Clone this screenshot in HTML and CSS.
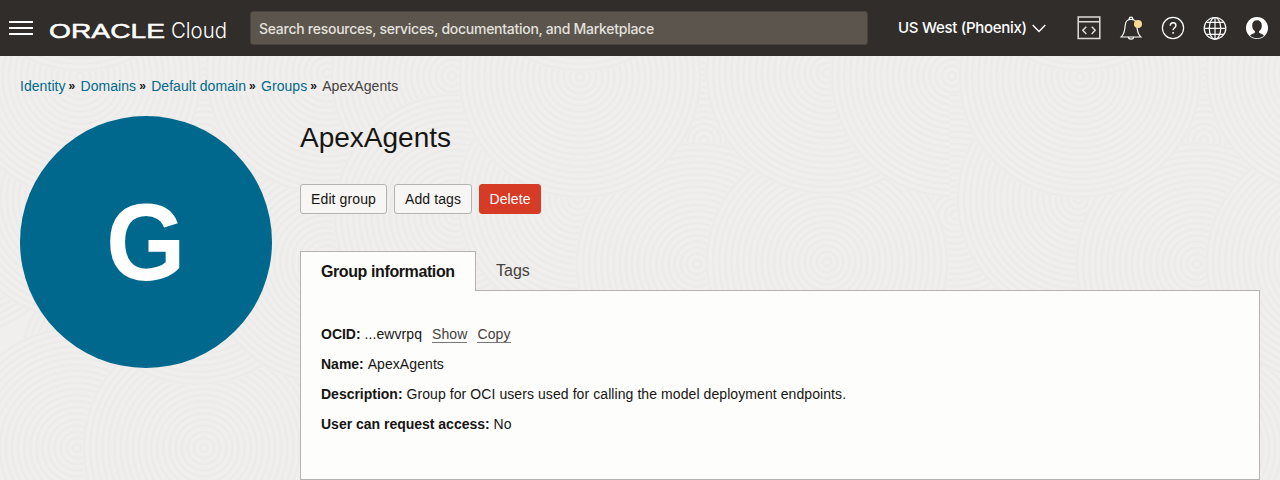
FILE: index.html
```html
<!DOCTYPE html>
<html lang="en">
<head>
<meta charset="utf-8">
<title>ApexAgents</title>
<link rel="stylesheet" href="styles.css">
</head>
<body>
<svg class="texture" width="1280" height="480" aria-hidden="true">
  <defs>
    <radialGradient id="rings" gradientUnits="userSpaceOnUse" cx="0" cy="0" r="6.1" spreadMethod="repeat">
      <stop offset="0" stop-color="#f0efed"/>
      <stop offset=".3" stop-color="#f0efed"/>
      <stop offset=".7" stop-color="#ebeae8"/>
      <stop offset="1" stop-color="#f0efed"/>
    </radialGradient>
    <circle id="disc" r="122" fill="url(#rings)"/>
    <g id="tile">
      <use href="#disc" x="455" y="215"/>
      <use href="#disc" x="640" y="370"/>
      <use href="#disc" x="800" y="370"/>
      <use href="#disc" x="820" y="490"/>
      <use href="#disc" x="704" y="140"/>
      <use href="#disc" x="577" y="448"/>
      <use href="#disc" x="704" y="448"/>
      <use href="#disc" x="578" y="199"/>
      <use href="#disc" x="697" y="264"/>
      <use href="#disc" x="827" y="262"/>
      <use href="#disc" x="827" y="73"/>
      <use href="#disc" x="952" y="76"/>
      <use href="#disc" x="580" y="77"/>
      <use href="#disc" x="580" y="-50"/>
    </g>
  </defs>
  <use href="#tile" x="-1000"/>
  <use href="#tile" x="500"/>
  <use href="#tile" x="-500"/>
  <use href="#tile"/>
  <svg x="950" width="330" height="480" viewBox="950 0 330 480"><use href="#tile" x="500"/></svg>
</svg>

<header class="topbar">
  <svg class="menu" width="24" height="16" viewBox="0 0 24 16"><path d="M0 2h24M0 8h24M0 14h24" stroke="#fff" stroke-width="2"/></svg>
  <svg class="brand" width="180" height="24" viewBox="0 0 180 24">
    <text class="brand-oracle" x="-1" y="20" textLength="116" lengthAdjust="spacingAndGlyphs">ORACLE</text>
    <text class="brand-cloud" x="121" y="20" textLength="56" lengthAdjust="spacingAndGlyphs">Cloud</text>
  </svg>
  <div class="search">Search resources, services, documentation, and Marketplace</div>
  <div class="region"><span>US West (Phoenix)</span>
    <svg width="14" height="9" viewBox="0 0 14 9"><path d="M.7 1 7 7.5 13.3 1" fill="none" stroke="#fff" stroke-width="1.4"/></svg>
  </div>
  <nav class="tools">
    <svg width="24" height="24" viewBox="0 0 24 24" fill="none" stroke="#dedcd9" stroke-width="1.5"><path d="M1.2 1h21.6v21.6H1.2zM1.2 5.8h21.6"/><path d="m9.3 10.7-3.5 3.6 3.500 3.600M14.700 10.700l3.500 3.600-3.500 3.600"/></svg>
    <svg width="24" height="24" viewBox="0 0 24 24" fill="none" stroke="#fff" stroke-width="1.200"><path d="M10.200 3.500V2.800a1.800 1.600 0 0 1 3.600 0v.7M12 3.300C8 3.300 6.400 6 6.200 9.300c-.3 6-1.800 9.600-4 11.700h19.600c-2.200-2.100-3.700-5.700-4-11.700C17.600 6 16 3.300 12 3.300zM9.400 21a2.600 2.200 0 0 0 5.200 0"/><circle cx="19" cy="8" r="4" fill="#f9d993" stroke="none"/></svg>
    <svg width="24" height="24" viewBox="0 0 24 24" fill="none" stroke="#fff" stroke-width="1.200"><circle cx="12" cy="12" r="10.600"/><path d="M9.300 9.700c0-1.800 1.200-2.900 2.800-2.900s2.800 1 2.800 2.600c0 2.200-2.800 2.400-2.800 4.900" stroke-width="1.400"/><path d="M12.100 16v1.700" stroke-width="1.500"/></svg>
    <svg width="24" height="24" viewBox="0 0 24 24" fill="none" stroke="#fff" stroke-width="1.200"><circle cx="12" cy="12.300" r="10.800"/><ellipse cx="12" cy="12.300" rx="5.700" ry="10.800"/><path d="M12 1.500v21.600M1.200 12.300h21.600M3.500 6.300h17M3.500 18.300h17"/></svg>
    <svg width="24" height="24" viewBox="0 0 24 24"><circle cx="12" cy="12" r="11" fill="#fff"/><path d="M12 4.200c-3 0-4.800 2-4.800 5.200 0 2.700 1.200 4.700 2.700 5.700v1.400c-.6 1-3.400 1.500-4.900 2.900 1.800 1.800 4.200 2.800 7 2.800s5.200-1 7-2.800c-1.500-1.400-4.300-1.900-4.900-2.900v-1.400c1.500-1 2.700-3 2.700-5.700 0-3.200-1.800-5.200-4.800-5.200z" fill="#312d2a"/></svg>
  </nav>
</header>

<nav class="crumbs">
  <a>Identity</a><i>»</i><a>Domains</a><i>»</i><a>Default domain</a><i>»</i><a>Groups</a><i>»</i><span>ApexAgents</span>
</nav>

<main class="page">
  <div class="avatar"><span>G</span></div>
  <section class="content">
    <h1>ApexAgents</h1>
    <div class="actions">
      <button class="btn btn-edit">Edit group</button>
      <button class="btn btn-tags">Add tags</button>
      <button class="btn btn-delete">Delete</button>
    </div>
    <div class="tabs">
      <div class="tab tab-active"><span>Group information</span></div>
      <div class="tab">Tags</div>
    </div>
    <div class="panel">
      <p><b>OCID:</b> <span>...ewvrpq</span><a>Show</a><a>Copy</a></p>
      <p><b>Name:</b> <span>ApexAgents</span></p>
      <p><b>Description:</b> <span>Group for OCI users used for calling the model deployment endpoints.</span></p>
      <p><b>User can request access:</b> <span>No</span></p>
    </div>
  </section>
</main>
</body>
</html>
```
FILE: styles.css
```css
* { box-sizing: border-box; }
body {
  margin: 0;
  height: 480px;
  overflow: hidden;
  background: #f0efed;
  color: #161513;
  font: 14px/20px "Liberation Sans", Arial, sans-serif;
}
.texture { position: absolute; inset: 0; z-index: -1; }

.topbar {
  display: flex;
  align-items: center;
  height: 56px;
  padding-left: 9px;
  background: #312d2a;
  color: #fff;
}
.topbar svg { display: block; flex: none; }
.brand { margin: 4px 0 0 17px; overflow: visible; }
.brand text { fill: #fff; }
.brand-oracle { font: 21px "Liberation Sans", sans-serif; stroke: #fff; stroke-width: .5px; }
.brand-cloud { font: 300 22px Inter, sans-serif; }
.search {
  width: 618px;
  height: 34px;
  margin-left: 20px;
  padding: 0 8px;
  border: 1px solid #47423d;
  border-radius: 3px;
  background: #5b554e;
  color: #e4e1dd;
  font: 500 14px/33px Inter, sans-serif;
  letter-spacing: -.27px;
  white-space: nowrap;
}
.region {
  display: flex;
  align-items: center;
  gap: 5px;
  width: 148px;
  margin-left: 30px;
  font: 500 15px/20px Inter, sans-serif;
  letter-spacing: -.3px;
  white-space: nowrap;
}
.tools { display: flex; gap: 18px; margin-left: 31px; }

.crumbs {
  display: flex;
  height: 60px;
  padding: 20px 20px 0;
  color: #45413d;
  letter-spacing: .05px;
}
.crumbs a { color: #00688c; }
.crumbs i {
  width: 15px;
  padding-left: 3px;
  color: #161513;
  font-style: normal;
  font-weight: bold;
  font-size: 12px;
}

.page { display: flex; gap: 28px; padding: 0 20px; }
.avatar {
  display: flex;
  flex: none;
  align-items: center;
  justify-content: center;
  width: 252px;
  height: 252px;
  border-radius: 50%;
  background: #00688c;
  color: #fff;
  font-size: 110px;
  font-weight: bold;
}
.avatar span { transform: scaleX(.93); }
.content { flex: 1; }
h1 { margin: 4px 0 28px; font-size: 28px; font-weight: 400; line-height: 36px; }
.actions { display: flex; gap: 7px; }
.btn {
  height: 30px;
  padding: 0;
  border: 1px solid #b5b3b0;
  border-radius: 3px;
  background: #f7f6f4;
  color: #161513;
  font: inherit;
  letter-spacing: .1px;
}
.btn-edit { width: 87px; }
.btn-tags { width: 78px; }
.btn-delete { width: 62px; border-color: #d63b25; background: #d63b25; color: #fff; }

.tabs { display: flex; height: 39px; margin-top: 37px; font-size: 16px; line-height: 40px; }
.tab { padding: 0 20px; color: #45413d; }
.tab-active {
  z-index: 1;
  width: 176px;
  height: 40px;
  border: 1px solid #b5b3b0;
  border-bottom: 0;
  background: #fdfdfb;
  color: #161513;
  font-weight: bold;
  white-space: nowrap;
}
.tab-active span { letter-spacing: -.4px; }
.panel {
  height: 190px;
  padding: 33px 20px 0;
  border: 1px solid #b5b3b0;
  background: #fdfdfb;
}
.panel p { margin: 0 0 10px; }
.panel span { letter-spacing: .08px; }
.panel b { letter-spacing: -.01px; }
.panel a {
  margin-left: 10px;
  border-bottom: 1px solid #777;
  color: #45413d;
  line-height: 16px;
  letter-spacing: .1px;
}
```
